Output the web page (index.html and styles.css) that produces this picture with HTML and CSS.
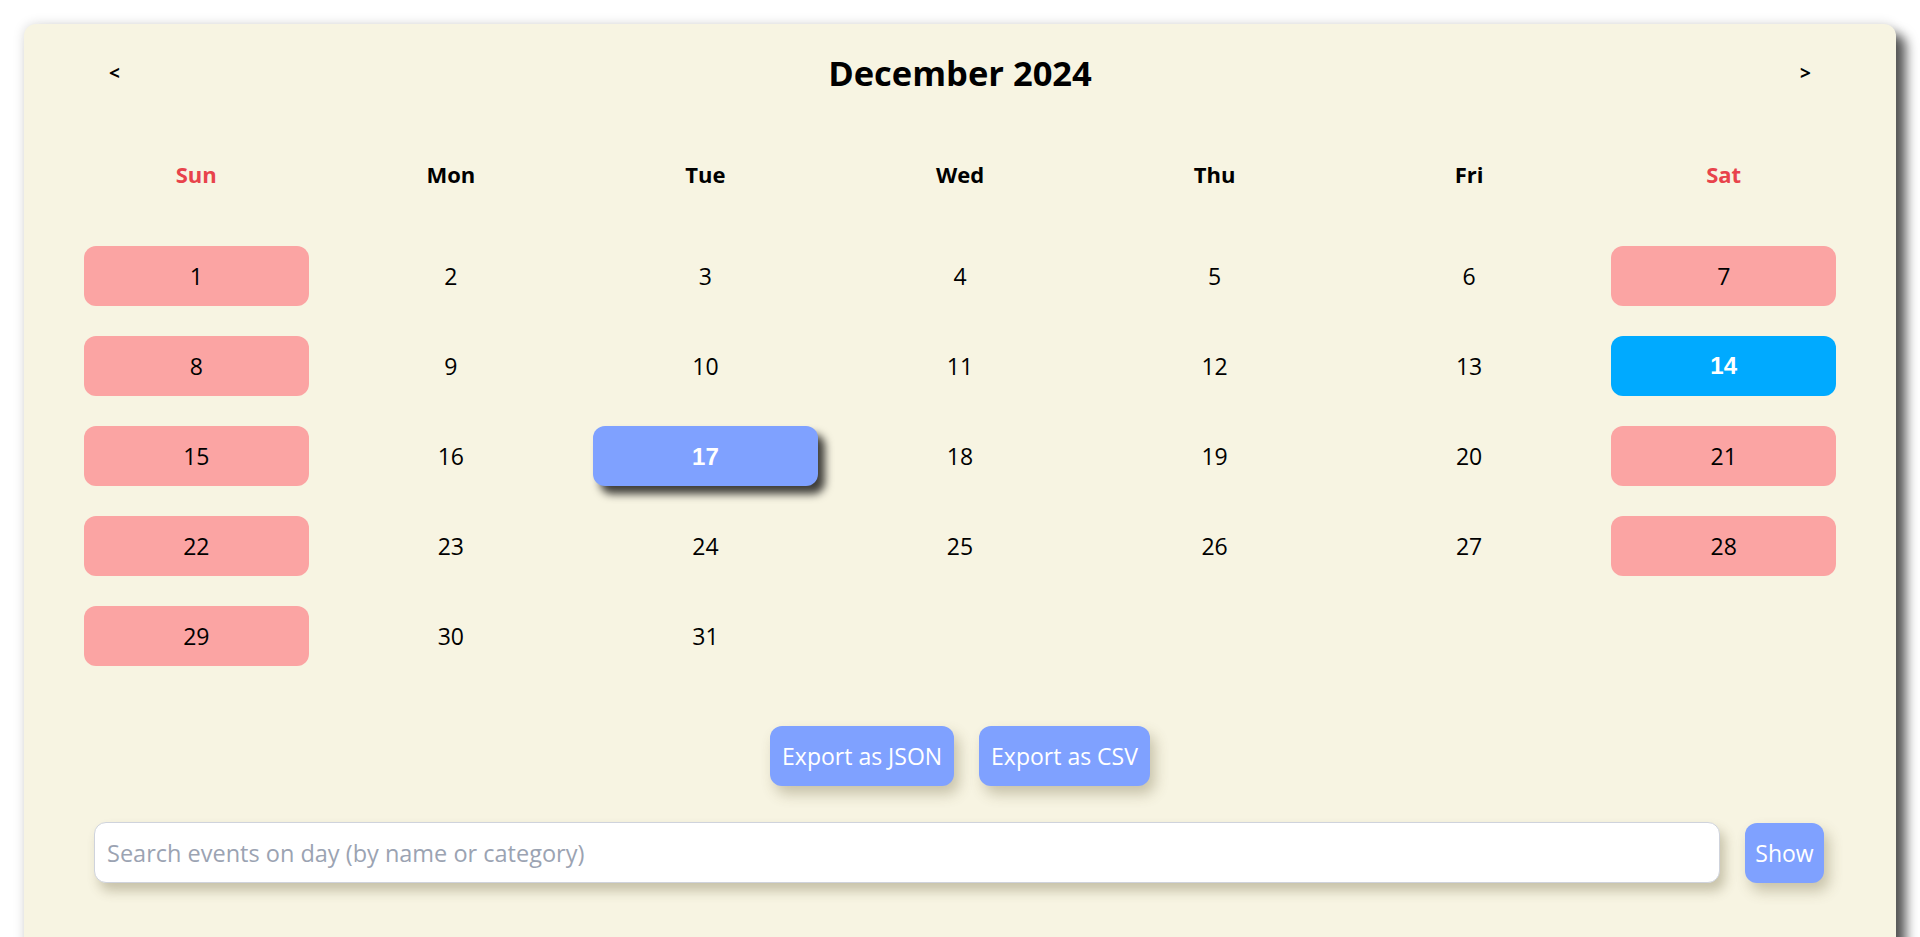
FILE: index.html
```html
<!DOCTYPE html>
<html lang="en">
<head>
<meta charset="utf-8">
<title>Calendar</title>
<link rel="stylesheet" href="styles.css">
</head>
<body>
<div class="card">
  <div class="header">
    <button class="nav">&lt;</button>
    <h2 class="title">December 2024</h2>
    <button class="nav">&gt;</button>
  </div>
  <div class="weekdays">
    <div class="wd weekend-text">Sun</div>
    <div class="wd">Mon</div>
    <div class="wd">Tue</div>
    <div class="wd">Wed</div>
    <div class="wd">Thu</div>
    <div class="wd">Fri</div>
    <div class="wd weekend-text">Sat</div>
  </div>
  <div class="days">
    <div class="day weekend">1</div><div class="day">2</div><div class="day">3</div><div class="day">4</div><div class="day">5</div><div class="day">6</div><div class="day weekend">7</div>
    <div class="day weekend">8</div><div class="day">9</div><div class="day">10</div><div class="day">11</div><div class="day">12</div><div class="day">13</div><div class="day today">14</div>
    <div class="day weekend">15</div><div class="day">16</div><div class="day selected">17</div><div class="day">18</div><div class="day">19</div><div class="day">20</div><div class="day weekend">21</div>
    <div class="day weekend">22</div><div class="day">23</div><div class="day">24</div><div class="day">25</div><div class="day">26</div><div class="day">27</div><div class="day weekend">28</div>
    <div class="day weekend">29</div><div class="day">30</div><div class="day">31</div><div class="day empty"></div><div class="day empty"></div><div class="day empty"></div><div class="day empty"></div>
  </div>
  <div class="exports">
    <button class="btn">Export as JSON</button>
    <button class="btn">Export as CSV</button>
  </div>
  <div class="search">
    <input class="search-input" type="text" placeholder="Search events on day (by name or category)">
    <button class="btn show">Show</button>
  </div>
</div>
</body>
</html>
```
FILE: styles.css
```css
html, body {
  margin: 0;
  padding: 0;
  background: #ffffff;
  overflow: hidden;
}
body {
  padding: 24px 24px 0 24px;
  font-family: "Open Sans", "DejaVu Sans", sans-serif;
  color: #000;
}
.card {
  background: #f7f4e2;
  border-radius: 12px;
  padding: 24px 60px 80px 60px;
  box-shadow: 10px 10px 12px rgba(0, 0, 0, 0.65), 0 0 12px rgba(0, 0, 0, 0.15);
}
.header {
  display: flex;
  align-items: center;
  justify-content: space-between;
  height: 50px;
}
.nav {
  background: transparent;
  border: none;
  font-family: "Open Sans", sans-serif;
  font-weight: 700;
  font-size: 19px;
  padding: 0 25px;
  color: #000;
  height: 50px;
}
.title {
  margin: 0;
  font-size: 34.5px;
  font-weight: 700;
  line-height: 50px;
}
.weekdays {
  display: grid;
  grid-template-columns: repeat(7, 1fr);
  column-gap: 30px;
  margin-top: 46px;
  margin-bottom: 42px;
}
.wd {
  height: 60px;
  line-height: 60px;
  text-align: center;
  font-weight: 700;
  font-size: 22px;
}
.weekend-text {
  color: #e8434b;
}
.days {
  display: grid;
  grid-template-columns: repeat(7, 1fr);
  column-gap: 30px;
  row-gap: 30px;
}
.day {
  height: 60px;
  border-radius: 12px;
  display: flex;
  align-items: center;
  justify-content: center;
  font-size: 23px;
}
.weekend {
  background: #fba4a3;
}
.today {
  background: #00aaff;
  color: #fff;
  font-family: "Liberation Sans", Arial, sans-serif;
  font-weight: 700;
  font-size: 24px;
}
.selected {
  background: #7fa1ff;
  color: #fff;
  font-family: "Liberation Sans", Arial, sans-serif;
  font-weight: 700;
  font-size: 24px;
  padding-top: 2px;
  box-sizing: border-box;
  box-shadow: 7px 8px 9px rgba(0, 0, 0, 0.75);
}
.exports {
  display: flex;
  justify-content: center;
  gap: 25px;
  margin-top: 60px;
}
.btn {
  background: #7fa1ff;
  color: #fff;
  border: none;
  border-radius: 12px;
  height: 60px;
  padding: 0 12px;
  font-family: "Open Sans", sans-serif;
  font-size: 23px;
  box-shadow: 5px 8px 14px rgba(90, 80, 40, 0.3);
}
.search {
  display: flex;
  align-items: center;
  gap: 25px;
  margin-top: 36px;
  padding: 0 12px 0 10px;
}
.search-input {
  flex: 1;
  height: 61px;
  box-sizing: border-box;
  border: 1px solid #cfd3dc;
  border-radius: 12px;
  background: #fff;
  padding: 0 12px;
  font-family: "Open Sans", sans-serif;
  font-size: 23.5px;
  box-shadow: 5px 8px 12px rgba(90, 80, 40, 0.3);
  outline: none;
}
.search-input::placeholder {
  color: #9ba3b2;
}
.show {
  width: 79px;
  padding: 0;
}
```
